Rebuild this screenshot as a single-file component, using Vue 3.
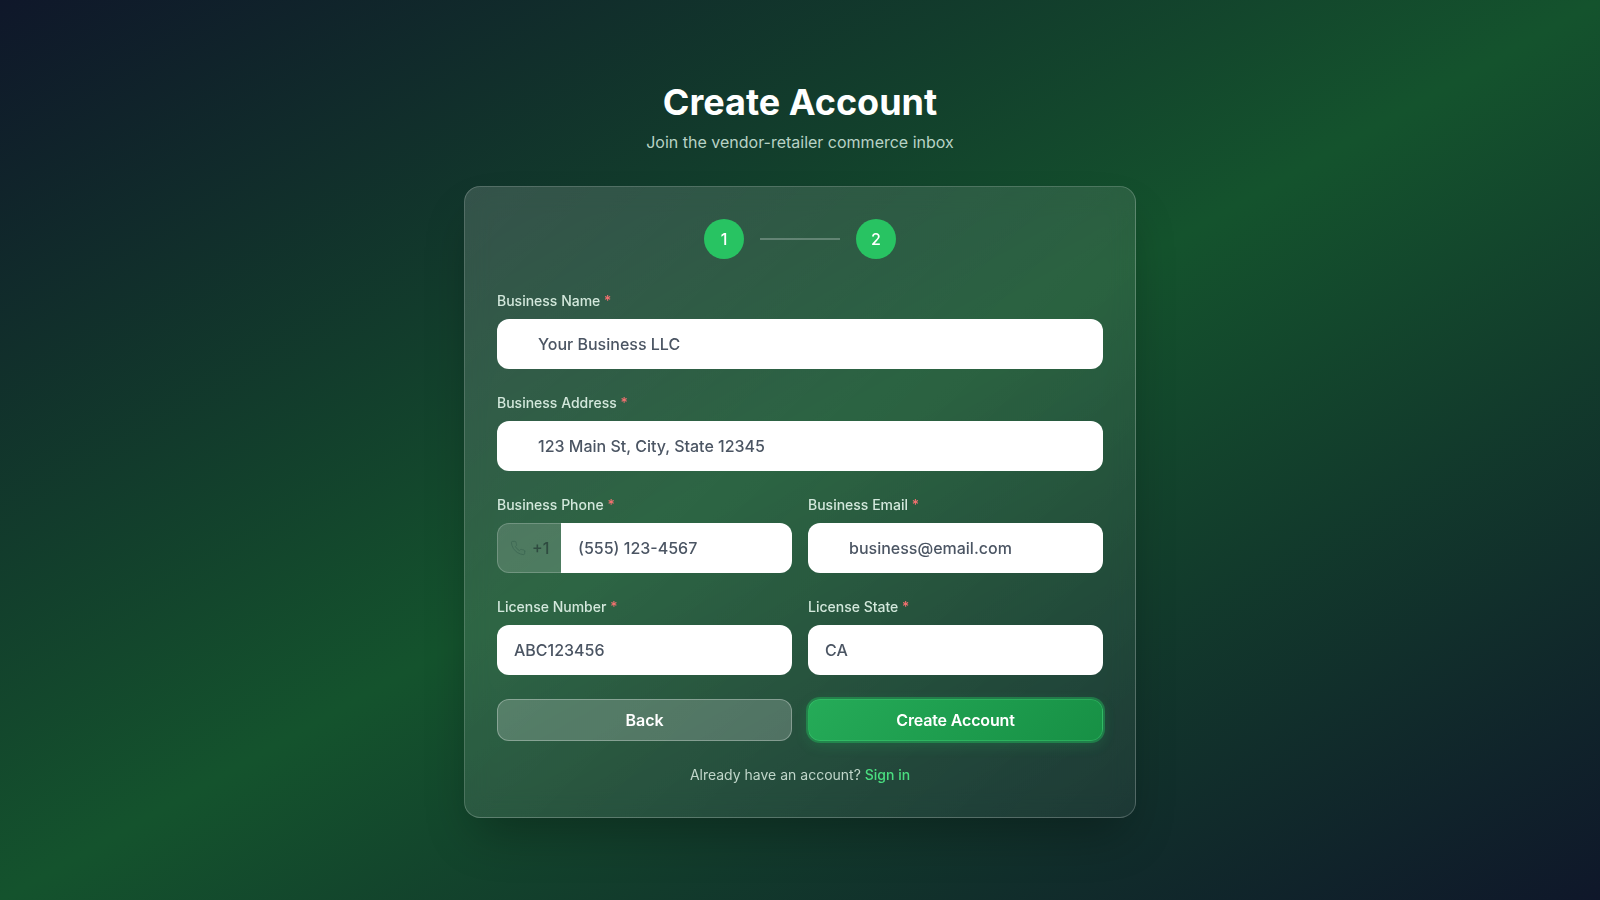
<script setup>
const steps = [1, 2]
</script>

<template>
  <main class="page">
    <header class="head">
      <h1>Create Account</h1>
      <p>Join the vendor-retailer commerce inbox</p>
    </header>
    <form class="card" @submit.prevent>
      <div class="stepper">
        <span class="dot">{{ steps[0] }}</span>
        <span class="line"></span>
        <span class="dot">{{ steps[1] }}</span>
      </div>

      <div class="field">
        <label>Business Name <em>*</em></label>
        <input class="with-icon" placeholder="Your Business LLC" />
      </div>
      <div class="field">
        <label>Business Address <em>*</em></label>
        <input class="with-icon" placeholder="123 Main St, City, State 12345" />
      </div>
      <div class="two">
        <div class="field">
          <label>Business Phone <em>*</em></label>
          <div class="phone">
            <span class="prefix">
              <svg viewBox="0 0 24 24" width="16" height="16" fill="none" stroke="currentColor" stroke-width="1.5" stroke-linecap="round" stroke-linejoin="round"><path d="M22 16.92v3a2 2 0 0 1-2.18 2 19.79 19.79 0 0 1-8.63-3.07 19.5 19.5 0 0 1-6-6 19.79 19.79 0 0 1-3.07-8.67A2 2 0 0 1 4.11 2h3a2 2 0 0 1 2 1.72 12.84 12.84 0 0 0 .7 2.81 2 2 0 0 1-.45 2.11L8.09 9.91a16 16 0 0 0 6 6l1.27-1.27a2 2 0 0 1 2.11-.45 12.84 12.84 0 0 0 2.81.7A2 2 0 0 1 22 16.92z"/></svg>
              +1
            </span>
            <input placeholder="(555) 123-4567" />
          </div>
        </div>
        <div class="field">
          <label>Business Email <em>*</em></label>
          <input class="with-icon" placeholder="business@email.com" />
        </div>
      </div>
      <div class="two">
        <div class="field">
          <label>License Number <em>*</em></label>
          <input placeholder="ABC123456" />
        </div>
        <div class="field">
          <label>License State <em>*</em></label>
          <input placeholder="CA" />
        </div>
      </div>

      <div class="two actions">
        <button type="button" class="btn back">Back</button>
        <button type="submit" class="btn primary">Create Account</button>
      </div>
      <p class="signin">Already have an account? <a href="#">Sign in</a></p>
    </form>
  </main>
</template>

<style>
html, body { margin: 0; }
</style>

<style scoped>
.page {
  box-sizing: border-box;
  min-height: 900px;
  display: flex;
  flex-direction: column;
  align-items: center;
  justify-content: center;
  background: linear-gradient(to bottom right, #0f172a 0%, #14532d 50%, #0f172a 100%);
  font-family: Inter, "Liberation Sans", sans-serif;
  color: #fff;
}
.head { text-align: center; margin-bottom: 32px; }
h1 { margin: 0 0 8px; font-size: 36px; line-height: 40px; font-weight: 700; }
.head p { margin: 0; font-size: 16px; line-height: 24px; color: #b8d2c5; }
.card {
  box-sizing: border-box;
  width: 672px;
  padding: 32px;
  border: 1px solid rgba(255, 255, 255, 0.2);
  border-radius: 16px;
  background: linear-gradient(135deg, rgba(255, 255, 255, 0.15), rgba(255, 255, 255, 0.05));
  backdrop-filter: blur(12px);
  box-shadow: 0 25px 50px -12px rgba(0, 0, 0, 0.3);
}
.stepper { display: flex; align-items: center; justify-content: center; gap: 16px; margin-bottom: 32px; }
.dot {
  width: 40px; height: 40px; border-radius: 50%;
  display: flex; align-items: center; justify-content: center;
  background: #28c362; font-size: 16px; font-weight: 500;
}
.line { width: 80px; height: 2px; background: rgba(255, 255, 255, 0.25); }
.field { display: flex; flex-direction: column; margin-bottom: 24px; min-width: 0; }
label { font-size: 14px; line-height: 20px; font-weight: 500; margin-bottom: 8px; color: #d3e8dc; }
label em { font-style: normal; color: #f87171; }
input {
  box-sizing: border-box;
  width: 100%;
  height: 50px;
  padding: 0 16px;
  border: 1px solid rgba(255, 255, 255, 0.2);
  border-radius: 12px;
  background: #fff;
  font: 500 16px Inter, "Liberation Sans", sans-serif;
  color: #374151;
  outline: none;
}
input::placeholder { color: #4b5563; opacity: 1; }
input.with-icon { padding-left: 40px; }
.two { display: grid; grid-template-columns: 1fr 1fr; gap: 16px; }
.phone { display: flex; height: 50px; }
.prefix {
  box-sizing: border-box;
  flex: none;
  width: 64px;
  display: flex; align-items: center; gap: 6px;
  padding-left: 12px;
  border: 1px solid rgba(255, 255, 255, 0.2);
  border-right: 0;
  border-radius: 12px 0 0 12px;
  background: rgba(255, 255, 255, 0.15);
  color: #2f4b40;
  font-size: 16px; font-weight: 500;
}
.prefix svg { color: #3f6a55; flex: none; }
.phone input { border-radius: 0 12px 12px 0; flex: 1; min-width: 0; }
.actions { margin-bottom: 24px; }
.btn {
  height: 42px;
  border-radius: 12px;
  font: 600 16px Inter, "Liberation Sans", sans-serif;
  color: #fff;
  cursor: pointer;
}
.back { background: rgba(255, 255, 255, 0.2); border: 1px solid rgba(255, 255, 255, 0.3); }
.primary {
  background: linear-gradient(135deg, #25ab58, #179045);
  border: 1px solid rgba(74, 222, 128, 0.35);
  box-shadow: 0 0 0 2px rgba(34, 197, 94, 0.4), 0 4px 14px rgba(34, 197, 94, 0.2);
  letter-spacing: -0.01em;
}
.signin { margin: 0; text-align: center; font-size: 14px; line-height: 20px; color: #c0d6ca; }
.signin a { color: #4ade80; font-weight: 500; text-decoration: none; }
</style>
